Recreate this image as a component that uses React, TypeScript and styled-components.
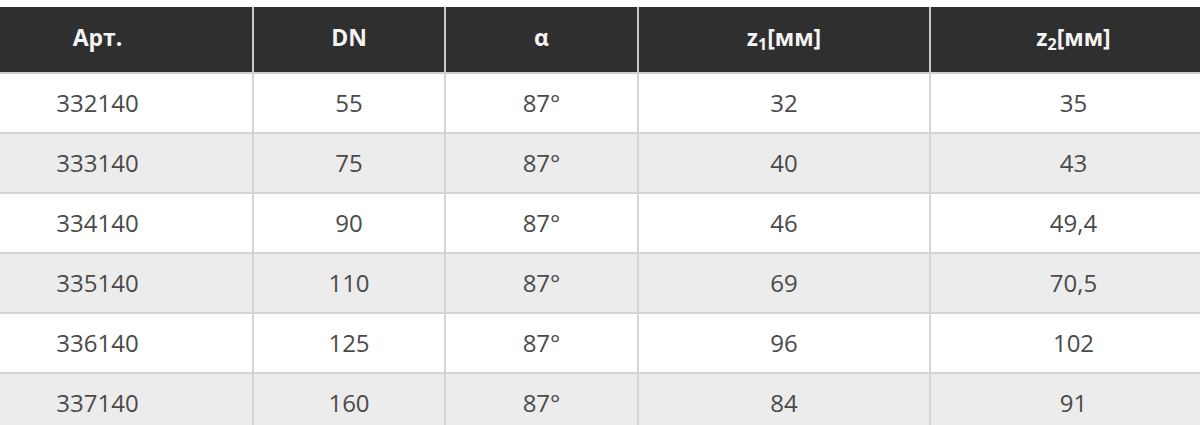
import React from 'react';
import styled, { createGlobalStyle } from 'styled-components';

const GlobalStyle = createGlobalStyle`
  html, body {
    margin: 0;
    padding: 0;
    background: #ffffff;
    overflow: hidden;
  }
  body {
    font-family: 'Open Sans', 'Liberation Sans', sans-serif;
  }
`;

const Page = styled.div`
  padding-top: 7px;
  width: 1200px;
  height: 425px;
  overflow: hidden;
`;

const Table = styled.table`
  margin-left: -57px;
  width: 1273px;
  border-collapse: collapse;
  table-layout: fixed;
  font-family: 'Open Sans', 'Liberation Sans', sans-serif;
`;

const HeadCell = styled.th<{ w: number }>`
  box-sizing: border-box;
  width: ${({ w }) => w}px;
  height: 66px;
  padding: 0 0 5px;
  background: #2f2f2f;
  color: #f4f4f4;
  font-size: 23px;
  font-weight: 700;
  text-align: center;
  vertical-align: middle;
  border-left: 2px solid #c9c9c9;
  border-bottom: 2px solid #cfcfcf;

  &:first-child {
    border-left: none;
  }

  sub {
    font-size: 16px;
    vertical-align: -4px;
    line-height: 0;
  }
`;

const Row = styled.tr<{ shaded?: boolean }>`
  background: ${({ shaded }) => (shaded ? '#ececec' : '#ffffff')};
`;

const Cell = styled.td`
  box-sizing: border-box;
  height: 60px;
  padding: 0 0 2px;
  color: #4a4a4a;
  font-size: 24px;
  font-weight: 400;
  text-align: center;
  vertical-align: middle;
  border-left: 2px solid #d4d4d4;
  border-bottom: 2px solid #d4d4d4;

  &:first-child {
    border-left: none;
  }
`;

const columns = [310, 192, 193, 292, 286];

const rows = [
  ['332140', '55', '87°', '32', '35'],
  ['333140', '75', '87°', '40', '43'],
  ['334140', '90', '87°', '46', '49,4'],
  ['335140', '110', '87°', '69', '70,5'],
  ['336140', '125', '87°', '96', '102'],
  ['337140', '160', '87°', '84', '91'],
];

export default function App() {
  return (
    <Page>
      <GlobalStyle />
      <Table>
        <thead>
          <tr>
            <HeadCell w={columns[0]}>Арт.</HeadCell>
            <HeadCell w={columns[1]}>DN</HeadCell>
            <HeadCell w={columns[2]}>α</HeadCell>
            <HeadCell w={columns[3]}>
              z<sub>1</sub>[мм]
            </HeadCell>
            <HeadCell w={columns[4]}>
              z<sub>2</sub>[мм]
            </HeadCell>
          </tr>
        </thead>
        <tbody>
          {rows.map((r, i) => (
            <Row key={r[0]} shaded={i % 2 === 1}>
              {r.map((v, j) => (
                <Cell key={j}>{v}</Cell>
              ))}
            </Row>
          ))}
        </tbody>
      </Table>
    </Page>
  );
}
